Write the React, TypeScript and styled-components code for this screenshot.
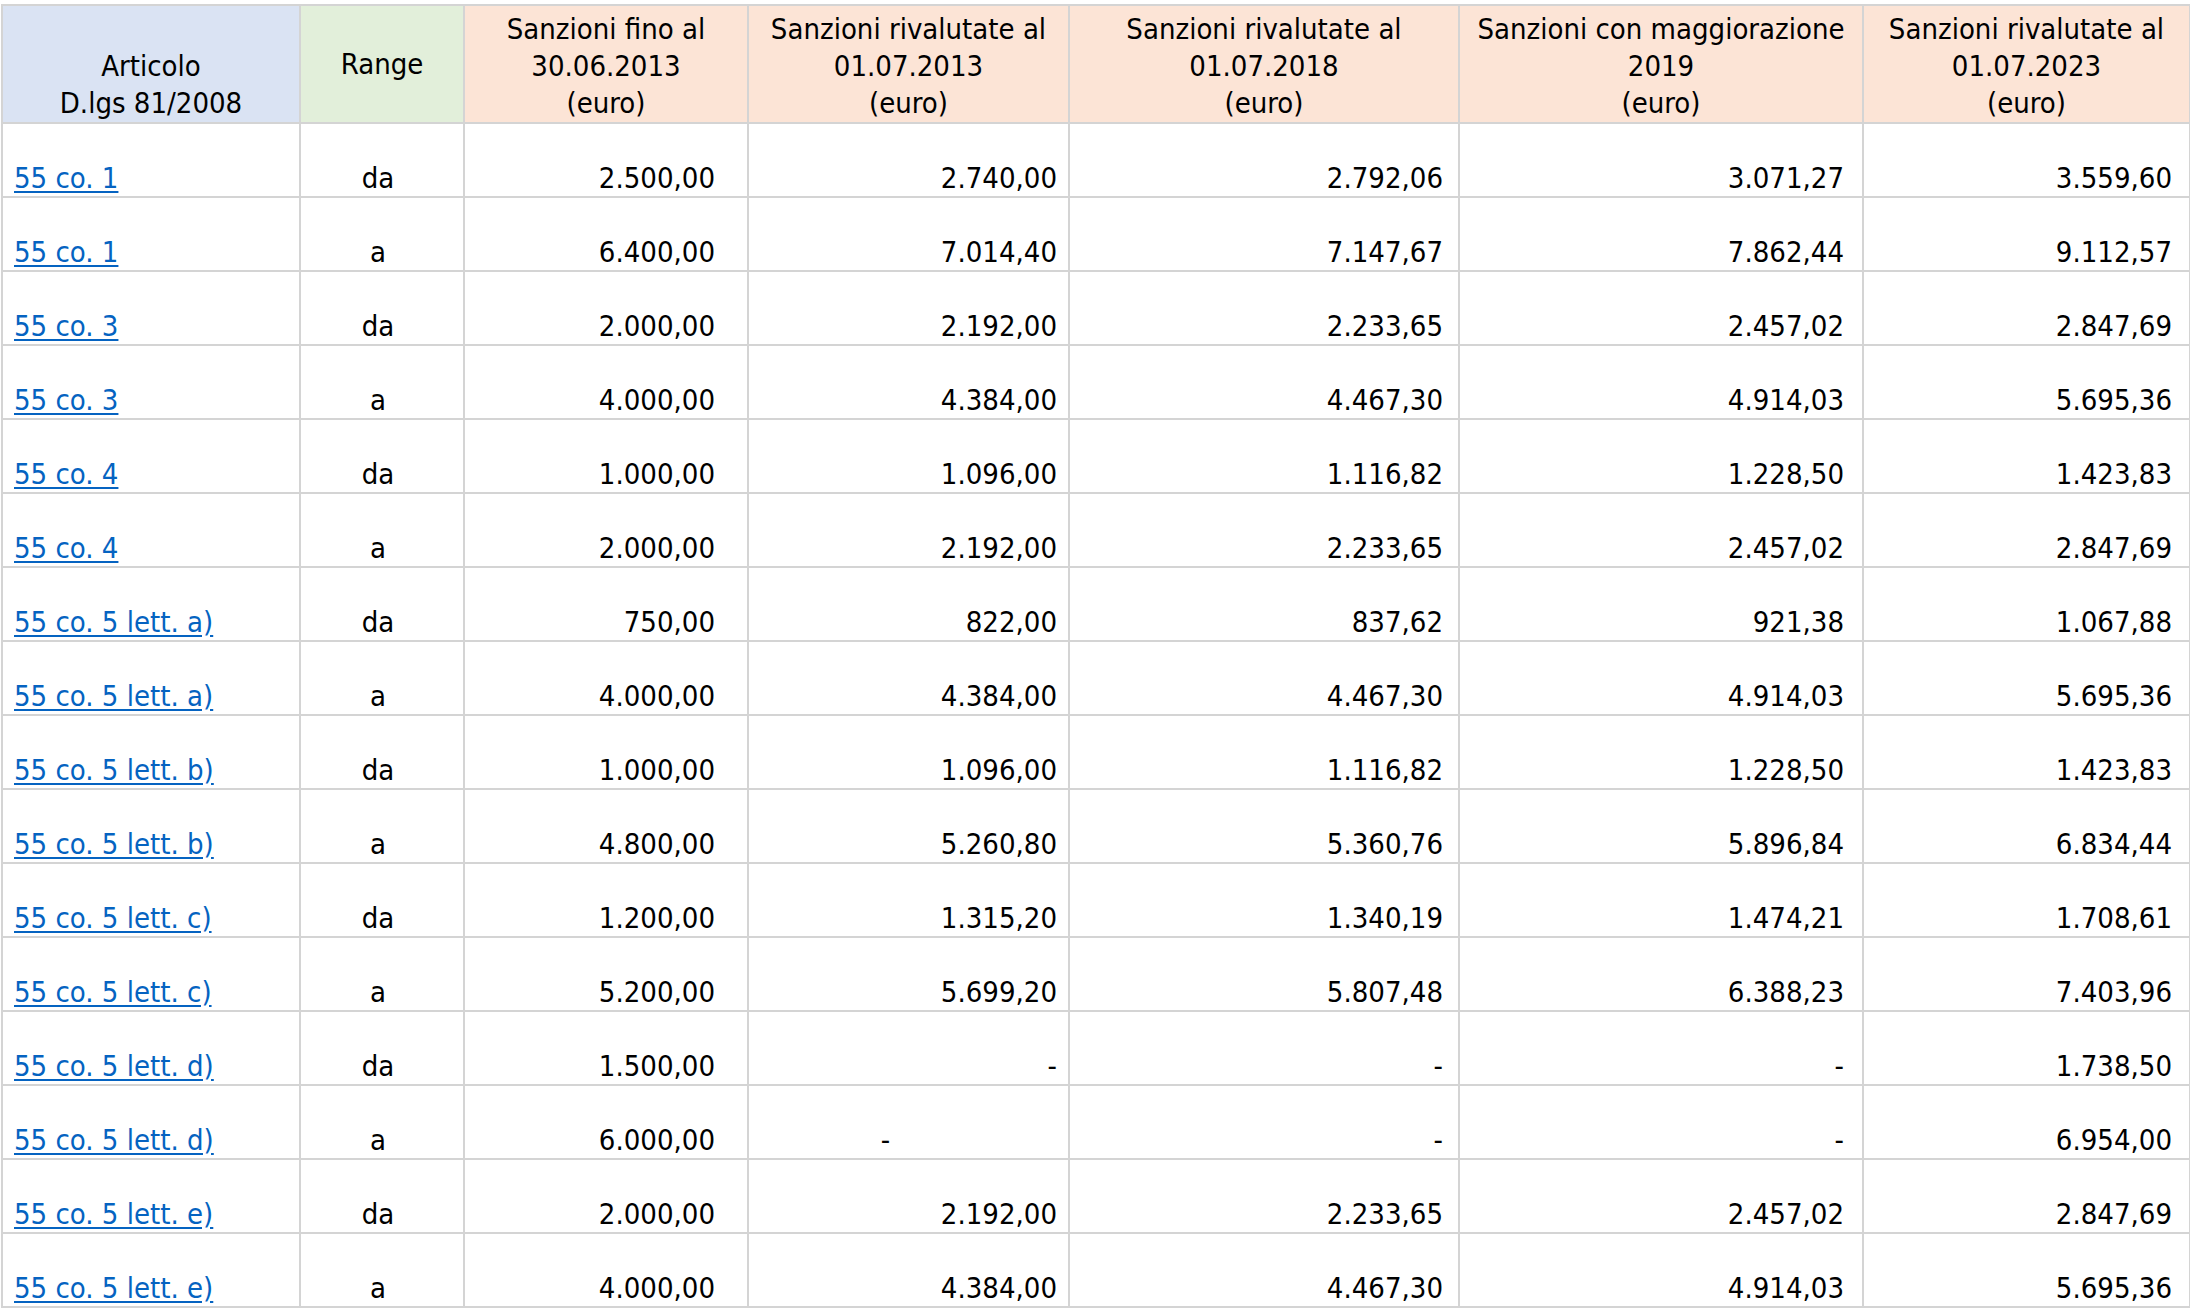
import React from "react";
import styled, { createGlobalStyle } from "styled-components";

const Global = createGlobalStyle`
    body {
        margin: 0;
        background: #ffffff;
        font-family: "DejaVu Sans Condensed", "DejaVu Sans", sans-serif;
    }
`;

const Page = styled.div`
    padding: 4px 0 0 1px;
`;

const Table = styled.table`
    border-collapse: collapse;
    table-layout: fixed;
    width: 2188px;
    font-size: 29px;
    color: #000;
`;

const Head = styled.th<{ bg: string; middle?: boolean }>`
    background: ${({ bg }) => bg};
    border: 2px solid #d4d4d4;
    height: 116px;
    font-weight: normal;
    line-height: 37px;
    vertical-align: ${({ middle }) => (middle ? "middle" : "bottom")};
    text-align: center;
    padding: 0 2px 0;
    white-space: nowrap;
`;

const Cell = styled.td<{ align?: string; pr?: number }>`
    border: 2px solid #d4d4d4;
    height: 72px;
    vertical-align: bottom;
    text-align: ${({ align }) => align ?? "right"};
    padding: 0 ${({ pr }) => pr ?? 12}px 0 ${({ align }) => (align === "left" ? 11 : 4)}px;
    line-height: 36px;
    white-space: nowrap;
`;

const Link = styled.a`
    color: #0563c1;
    text-decoration: underline;
    text-underline-offset: 3px;
`;

const widths = [298, 164, 284, 321, 390, 404, 327];

const headers: [string[], string, boolean][] = [
    [["Articolo", "D.lgs 81/2008"], "#dae3f3", false],
    [["Range"], "#e2efda", true],
    [["Sanzioni fino al", "30.06.2013", "(euro)"], "#fce4d6", false],
    [["Sanzioni rivalutate al", "01.07.2013", "(euro)"], "#fce4d6", false],
    [["Sanzioni rivalutate al", "01.07.2018", "(euro)"], "#fce4d6", false],
    [["Sanzioni con maggiorazione", "2019", "(euro)"], "#fce4d6", false],
    [["Sanzioni rivalutate al", "01.07.2023", "(euro)"], "#fce4d6", false],
];

const rows: string[][] = [
    ["55 co. 1", "da", "2.500,00", "2.740,00", "2.792,06", "3.071,27", "3.559,60"],
    ["55 co. 1", "a", "6.400,00", "7.014,40", "7.147,67", "7.862,44", "9.112,57"],
    ["55 co. 3", "da", "2.000,00", "2.192,00", "2.233,65", "2.457,02", "2.847,69"],
    ["55 co. 3", "a", "4.000,00", "4.384,00", "4.467,30", "4.914,03", "5.695,36"],
    ["55 co. 4", "da", "1.000,00", "1.096,00", "1.116,82", "1.228,50", "1.423,83"],
    ["55 co. 4", "a", "2.000,00", "2.192,00", "2.233,65", "2.457,02", "2.847,69"],
    ["55 co. 5 lett. a)", "da", "750,00", "822,00", "837,62", "921,38 ", "1.067,88"],
    ["55 co. 5 lett. a)", "a", "4.000,00", "4.384,00", "4.467,30", "4.914,03", "5.695,36"],
    ["55 co. 5 lett. b)", "da", "1.000,00", "1.096,00", "1.116,82", "1.228,50", "1.423,83"],
    ["55 co. 5 lett. b)", "a", "4.800,00", "5.260,80", "5.360,76", "5.896,84", "6.834,44"],
    ["55 co. 5 lett. c)", "da", "1.200,00", "1.315,20", "1.340,19", "1.474,21", "1.708,61"],
    ["55 co. 5 lett. c)", "a", "5.200,00", "5.699,20", "5.807,48", "6.388,23", "7.403,96"],
    ["55 co. 5 lett. d)", "da", "1.500,00", "-", "-", "-", "1.738,50"],
    ["55 co. 5 lett. d)", "a", "6.000,00", "-", "-", "-", "6.954,00"],
    ["55 co. 5 lett. e)", "da", "2.000,00", "2.192,00", "2.233,65", "2.457,02", "2.847,69"],
    ["55 co. 5 lett. e)", "a", "4.000,00", "4.384,00", "4.467,30", "4.914,03", "5.695,36"],
];

const padRight = [0, 0, 32, 11, 15, 18, 17];

export default function App() {
    return (
        <Page>
            <Global />
            <Table>
                <colgroup>
                    {widths.map((w, i) => <col key={i} style={{ width: w }} />)}
                </colgroup>
                <thead>
                    <tr>
                        {headers.map(([lines, bg, middle], i) => (
                            <Head key={i} bg={bg} middle={middle}>
                                {lines.map((l, j) => <div key={j}>{l}</div>)}
                            </Head>
                        ))}
                    </tr>
                </thead>
                <tbody>
                    {rows.map((r, ri) => (
                        <tr key={ri}>
                            <Cell align="left"><Link href="#">{r[0]}</Link></Cell>
                            <Cell align="center">{r[1]}</Cell>
                            {r.slice(2).map((v, ci) => {
                                // the lone dash in 01.07.2013 of the last "d)" row sits left of centre
                                const odd = ri === 13 && ci === 1;
                                return (
                                    <Cell key={ci} align={odd ? "center" : "right"} pr={odd ? 50 : padRight[ci + 2]}>
                                        {v}
                                    </Cell>
                                );
                            })}
                        </tr>
                    ))}
                </tbody>
            </Table>
        </Page>
    );
}
